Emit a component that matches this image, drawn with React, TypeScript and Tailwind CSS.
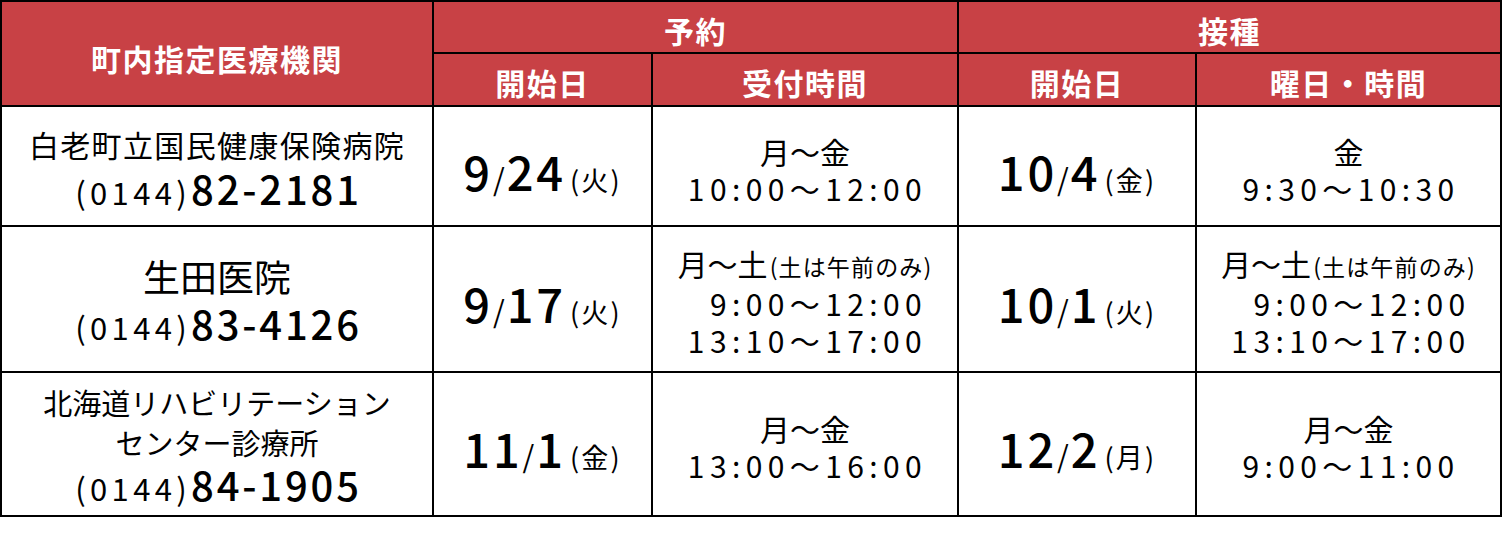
import React from "react";

const FONT = { fontFamily: '"Noto Sans CJK JP", "Noto Sans", sans-serif' };

function Phone({ num }: { num: string }) {
  return (
    <div className="leading-[44px] whitespace-nowrap">
      <span className="text-[31px] tracking-[0.14em]">(0144)</span>
      <span className="text-[40px] font-medium tracking-[0.07em] mr-[-3px]">{num}</span>
    </div>
  );
}

function DateText({ m, d, w }: { m: string; d: string; w: string }) {
  return (
    <div className="whitespace-nowrap leading-none flex items-baseline">
      <span className="text-[47px] font-medium tracking-[0.06em]">{m}</span>
      <span className="text-[30px] mr-[2px]">/</span>
      <span className="text-[47px] font-medium tracking-[0.06em]">{d}</span>
      <span className="text-[27px] ml-[4px] tracking-[0.08em]">({w})</span>
    </div>
  );
}

function Times({ lines }: { lines: React.ReactNode[] }) {
  return (
    <div className="flex flex-col items-center text-[30px] leading-[37px] whitespace-nowrap">
      {lines.map((l, i) => (
        <div key={i}>{l}</div>
      ))}
    </div>
  );
}

function Num({ t, pad }: { t: string; pad?: boolean }) {
  return (
    <span className={`tracking-[0.18em] mr-[-5px] ${pad ? "pl-[22px]" : ""}`}>{t}</span>
  );
}

const Sat = (
  <span>
    月～土<span className="text-[23px] tracking-[0.05em] ml-[2px]">(土は午前のみ)</span>
  </span>
);

export default function App() {
  const head =
    "bg-[#c84145] text-white font-bold text-[30px] flex items-center justify-center leading-none tracking-[0.05em]";
  const cell = "bg-white text-black flex flex-col items-center justify-center";
  return (
    <div className="w-[1504px] h-[533px] bg-white" style={FONT}>
      <div className="inline-grid bg-black p-[2px] gap-[2px] grid-cols-[430px_217px_304px_236px_303px] grid-rows-[50px_51px_118px_144px_142px]">
        <div className={`${head} row-span-2 pt-[8px]`}>町内指定医療機関</div>
        <div className={`${head} col-span-2 pt-[6px]`}>予約</div>
        <div className={`${head} col-span-2 pt-[6px]`}>接種</div>
        <div className={`${head} pt-[4px]`}>開始日</div>
        <div className={`${head} pt-[4px]`}>受付時間</div>
        <div className={`${head} pt-[4px]`}>開始日</div>
        <div className={`${head} pt-[4px]`}>曜日・時間</div>

        {/* Row 1 */}
        <div className={`${cell} pt-[10px]`}>
          <div className="text-[30px] leading-[44px] tracking-[0.045em]">白老町立国民健康保険病院</div>
          <Phone num="82-2181" />
        </div>
        <div className={`${cell} pt-[8px]`}>
          <DateText m="9" d="24" w="火" />
        </div>
        <div className={`${cell} pt-[8px]`}>
          <Times lines={["月～金", <Num t="10:00～12:00" />]} />
        </div>
        <div className={`${cell} pt-[8px]`}>
          <DateText m="10" d="4" w="金" />
        </div>
        <div className={`${cell} pt-[8px]`}>
          <Times lines={["金", <Num t="9:30～10:30" />]} />
        </div>

        {/* Row 2 */}
        <div className={`${cell} pt-[8px]`}>
          <div className="text-[37px] leading-[50px]">生田医院</div>
          <Phone num="83-4126" />
        </div>
        <div className={`${cell} pt-[6px]`}>
          <DateText m="9" d="17" w="火" />
        </div>
        <div className={`${cell} pt-[6px]`}>
          <Times lines={[Sat, <Num t="9:00～12:00" pad />, <Num t="13:10～17:00" />]} />
        </div>
        <div className={`${cell} pt-[6px]`}>
          <DateText m="10" d="1" w="火" />
        </div>
        <div className={`${cell} pt-[6px]`}>
          <Times lines={[Sat, <Num t="9:00～12:00" pad />, <Num t="13:10～17:00" />]} />
        </div>

        {/* Row 3 */}
        <div className={`${cell} pt-[10px]`}>
          <div className="text-[29px] leading-[40px]">北海道リハビリテーション</div>
          <div className="text-[29px] leading-[40px]">センター診療所</div>
          <Phone num="84-1905" />
        </div>
        <div className={`${cell} pt-[6px]`}>
          <DateText m="11" d="1" w="金" />
        </div>
        <div className={`${cell} pt-[6px]`}>
          <Times lines={["月～金", <Num t="13:00～16:00" />]} />
        </div>
        <div className={`${cell} pt-[6px]`}>
          <DateText m="12" d="2" w="月" />
        </div>
        <div className={`${cell} pt-[6px]`}>
          <Times lines={["月～金", <Num t="9:00～11:00" />]} />
        </div>
      </div>
    </div>
  );
}
